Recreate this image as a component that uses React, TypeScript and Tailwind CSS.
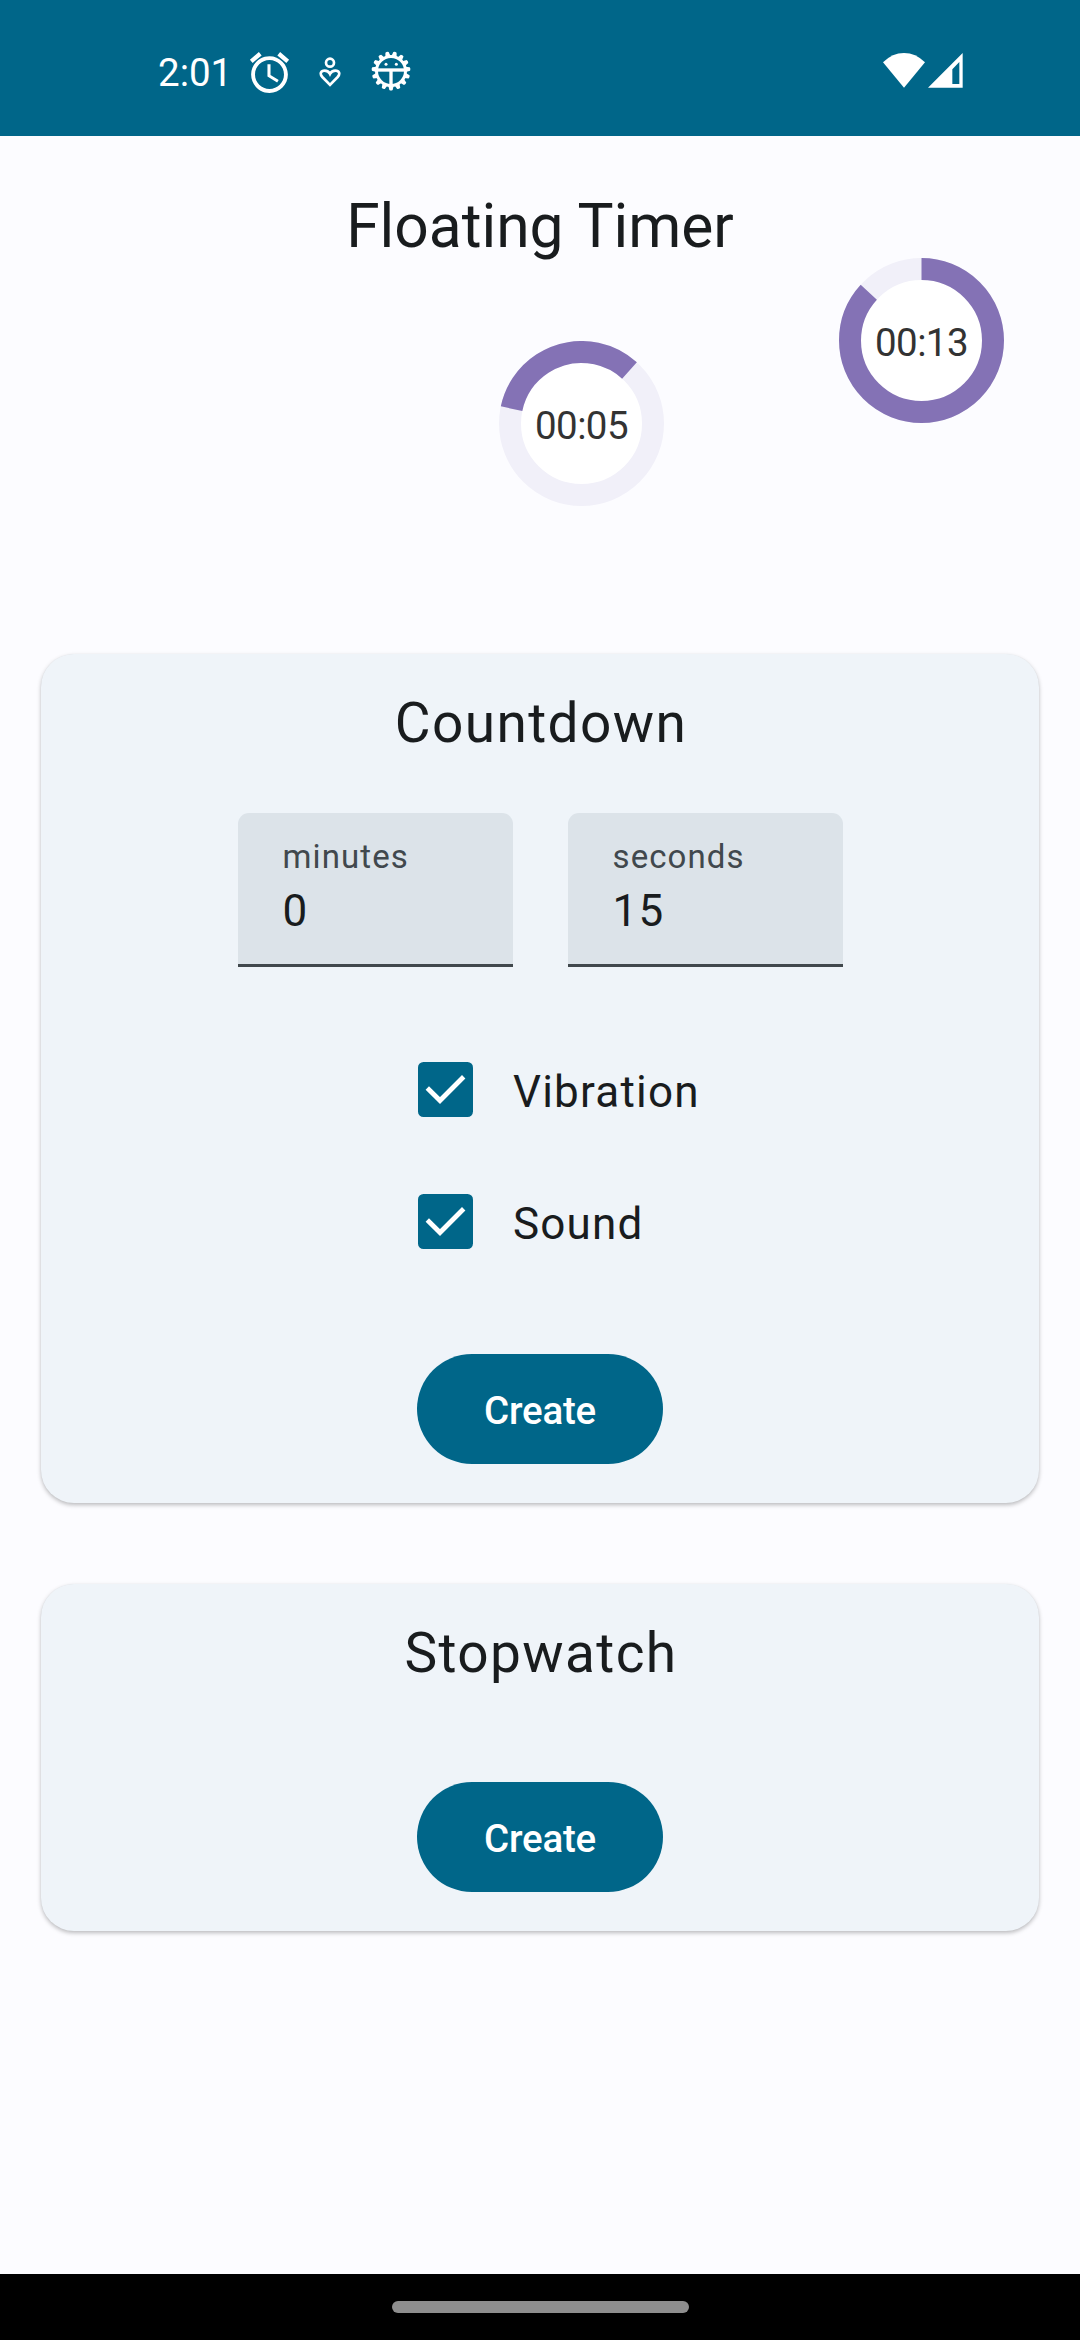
import React from "react";

function AlarmIcon() {
  return (
    <svg viewBox="0 0 24 24" className="h-[49px] w-[49px]" fill="white">
      <path d="M21.6 5.72l-4.4-3.7-1.35 1.6 4.4 3.7zM8.15 3.62L6.8 2.02 2.4 5.71l1.35 1.6zM12.5 8H11v6l4.75 2.85.75-1.23-4-2.37V8zM12 4c-4.97 0-9 4.03-9 9s4.02 9 9 9c4.97 0 9-4.03 9-9s-4.03-9-9-9zm0 16.1c-3.92 0-7.1-3.18-7.1-7.1s3.18-7.1 7.1-7.1 7.1 3.18 7.1 7.1-3.18 7.1-7.1 7.1z" />
    </svg>
  );
}

function HeartPersonIcon() {
  return (
    <svg viewBox="0 0 66 90" className="h-[30px] w-[22px]" fill="none" stroke="white" strokeWidth="8">
      <circle cx="33" cy="17" r="12" />
      <path d="M33 83.5 L10 60 C1 50 6 41 17 41 C24 41 30 45 33 51 C36 45 42 41 49 41 C60 41 65 50 56 60 Z" />
    </svg>
  );
}

const TEETH = Array.from({ length: 15 }, (_, i) => i * 24 + 12);

function GearFaceIcon() {
  return (
    <svg viewBox="-60 -60 120 120" className="h-10 w-10" fill="white">
      <circle r="43.5" fill="none" stroke="white" strokeWidth="9" />
      {TEETH.map((angle) => (
        <path key={angle} d="M-8 -44 L-5 -57 Q0 -60 5 -57 L8 -44 Z" transform={`rotate(${angle})`} />
      ))}
      <rect x="-46" y="-8" width="92" height="10" />
      <rect x="-5" y="-4" width="10" height="50" />
      <circle cx="-15" cy="-20" r="4.5" />
      <circle cx="16" cy="-20" r="4.5" />
    </svg>
  );
}

function WifiIcon() {
  return (
    <svg viewBox="0 0 126 105" className="h-[35px] w-[42px]" fill="white">
      <path d="M63 104 L0 28 Q28 0 63 0 Q98 0 126 28 Z" />
    </svg>
  );
}

function SignalIcon() {
  return (
    <svg viewBox="0 0 105 105" className="h-[35px] w-[35px]" fill="white" fillRule="evenodd">
      <path d="M104 0 V104 H0 Z M73 49 V93 H94 V27 Z" />
    </svg>
  );
}

function StatusBar() {
  return (
    <header className="flex h-[136px] shrink-0 items-start justify-between bg-[#006689] pl-[158px] pr-[117px] text-white">
      <div className="flex h-[145px] items-center">
        <span className="w-[87px] text-[38.5px] leading-[46px]">2:01</span>
        <AlarmIcon />
        <span className="ml-[25px] mt-[-1px]">
          <HeartPersonIcon />
        </span>
        <span className="ml-[30px] mt-[-3px]">
          <GearFaceIcon />
        </span>
      </div>
      <div className="flex gap-[3px] pt-[53px]">
        <WifiIcon />
        <SignalIcon />
      </div>
    </header>
  );
}

type TimerProps = { label: string; start: number; sweep: number; place: string };

function FloatingTimer({ label, start, sweep, place }: TimerProps) {
  const r = 71.5;
  const length = 2 * Math.PI * r;
  return (
    <div className={`absolute flex h-[165px] w-[165px] items-center justify-center ${place}`}>
      <svg viewBox="0 0 165 165" className="absolute inset-0 h-full w-full" fill="none" strokeWidth="22">
        <circle cx="82.5" cy="82.5" r={r} fill="white" stroke="#f1f0f9" />
        <circle
          cx="82.5"
          cy="82.5"
          r={r}
          stroke="#8472b5"
          strokeDasharray={`${(length * sweep) / 360} ${length}`}
          transform={`rotate(${start - 90} 82.5 82.5)`}
        />
      </svg>
      <span className="relative pt-1 text-[38.5px] leading-[46px] tracking-[-0.6px] text-[#333333]">{label}</span>
    </div>
  );
}

function NumberField({ label, value }: { label: string; value: string }) {
  return (
    <label className="flex h-[154px] w-[275px] flex-col rounded-t-[11px] border-b-[3px] border-[#41484d] bg-[#dce3e9] pl-[45px] pt-[22px]">
      <span className="text-[33px] leading-[44px] tracking-[1.1px] text-[#41484d]">{label}</span>
      <span className="text-[44px] leading-[64px] tracking-[1.375px]">{value}</span>
    </label>
  );
}

function CheckRow({ label }: { label: string }) {
  return (
    <div className="flex h-[132px] items-center">
      <svg viewBox="0 0 55 55" className="h-[55px] w-[55px]" fill="none">
        <rect width="55" height="55" rx="5.5" fill="#006689" />
        <path d="M9.3 26 L22 38.5 L45.7 14.8" stroke="white" strokeWidth="4.8" />
      </svg>
      <span className="ml-10 pt-[4px] text-[44px] leading-[66px] tracking-[1.2px]">{label}</span>
    </div>
  );
}

function CreateButton() {
  return (
    <button className="h-[110px] w-[246px] rounded-full bg-[#006689] pt-[3px] text-[38.5px] font-medium leading-[55px] tracking-[-0.2px] text-white">
      Create
    </button>
  );
}

const card =
  "flex w-[998px] flex-col items-center rounded-[33px] bg-[#eff4f9] shadow-[0_2px_4px_rgba(0,0,0,0.26),0_0_1px_rgba(0,0,0,0.06)]";
const heading = "pl-[2px] text-[55px] leading-[66px] tracking-[1.375px]";

export default function App() {
  return (
    <div
      className="relative flex h-[2340px] w-[1080px] flex-col overflow-hidden bg-[#fcfcff] text-[#191c1e]"
      style={{ fontFamily: 'Roboto, "Liberation Sans", sans-serif' }}
    >
      <StatusBar />
      <main className="flex grow flex-col items-center">
        <h1 className="mt-[52px] h-[466px] text-[60.5px] leading-[77px]">Floating Timer</h1>

        <section className={`${card} h-[849px] pt-[36px]`}>
          <h2 className={heading}>Countdown</h2>
          <div className="mt-[57px] flex gap-[55px]">
            <NumberField label="minutes" value="0" />
            <NumberField label="seconds" value="15" />
          </div>
          <div className="mt-[56.5px] ml-[377px] flex flex-col self-start">
            <CheckRow label="Vibration" />
            <CheckRow label="Sound" />
          </div>
          <div className="mt-[66.5px]">
            <CreateButton />
          </div>
        </section>

        <section className={`${card} mt-[81px] h-[347px] pt-[36px]`}>
          <h2 className={heading}>Stopwatch</h2>
          <div className="mt-[96px]">
            <CreateButton />
          </div>
        </section>
      </main>
      <footer className="flex h-[66px] shrink-0 justify-center bg-black pt-[27px]">
        <div className="h-3 w-[297px] rounded-full bg-[#8e8e8e]" />
      </footer>

      <FloatingTimer label="00:05" start={-78} sweep={120} place="left-[499px] top-[341px]" />
      <FloatingTimer label="00:13" start={0} sweep={312} place="left-[839px] top-[258px]" />
    </div>
  );
}
